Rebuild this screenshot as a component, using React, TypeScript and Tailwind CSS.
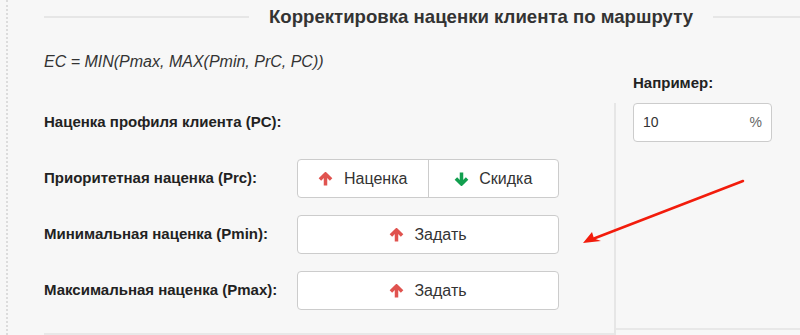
function ArrowUp() {
  return (
    <svg width="15" height="14" viewBox="0 0 15 14" className="shrink-0">
      <path d="M1.9 7.6 L7.5 2 L13.1 7.6" fill="none" stroke="#e0534f" strokeWidth="3.5" strokeLinejoin="miter" />
      <path d="M7.5 2.8 V13.5" stroke="#e0534f" strokeWidth="3.5" />
    </svg>
  )
}

function ArrowDown() {
  return (
    <svg width="15" height="14" viewBox="0 0 15 14" className="shrink-0">
      <path d="M1.9 6.4 L7.5 12 L13.1 6.4" fill="none" stroke="#129f4f" strokeWidth="3.5" strokeLinejoin="miter" />
      <path d="M7.5 0.5 V11.2" stroke="#129f4f" strokeWidth="3.5" />
    </svg>
  )
}

function Row({ label, children }: { label: string; children?: React.ReactNode }) {
  return (
    <div className="flex h-[39px] items-center">
      <div className="w-[253px] text-[15px] font-bold text-[#222]">{label}</div>
      {children}
    </div>
  )
}

function SetButton() {
  return (
    <button className="flex h-[39px] w-[262px] items-center justify-center gap-[10px] rounded-[4px] border border-[#cccccc] bg-white text-[16px] text-[#333]">
      <ArrowUp />
      <span>Задать</span>
    </button>
  )
}

export default function App() {
  return (
    <div className="relative flex h-[335px] w-[800px] overflow-hidden bg-[#f7f7f7] font-['Liberation_Sans',Arial,sans-serif] text-[#333]">
      <div className="ml-[6px] h-full border-l-2 border-dotted border-[#dcdcdc]" />

      <div className="flex flex-1 flex-col pl-[36px]">
        <div className="flex h-[34px] items-center gap-[20px]">
          <div className="h-[2px] w-[205px] bg-[#e6e6e6]" />
          <h2 className="text-[18.6px] font-bold text-[#333]">Корректировка наценки клиента по маршруту</h2>
          <div className="h-[2px] flex-1 bg-[#e6e6e6]" />
        </div>

        <div className="flex flex-1">
          <div className="flex w-[570px] flex-col border-b-2 border-[#e8e8e8] pb-[17px]">
            <p className="mt-[18px] h-[20px] text-[16px] leading-[20px] italic text-[#333]">
              EC = MIN(Pmax, MAX(Pmin, PrC, PC))
            </p>
            <div className="mt-[31px] flex flex-col gap-[17px]">
              <Row label="Наценка профиля клиента (PC):" />
              <Row label="Приоритетная наценка (Prc):">
                <div className="flex h-[39px] w-[262px] overflow-hidden rounded-[4px] border border-[#cccccc] bg-white text-[16px] text-[#333]">
                  <button className="flex flex-1 items-center justify-center gap-[11px] border-r border-[#cccccc]">
                    <ArrowUp />
                    <span>Наценка</span>
                  </button>
                  <button className="flex flex-1 items-center justify-center gap-[10px]">
                    <ArrowDown />
                    <span>Скидка</span>
                  </button>
                </div>
              </Row>
              <Row label="Минимальная наценка (Pmin):">
                <SetButton />
              </Row>
              <Row label="Максимальная наценка (Pmax):">
                <SetButton />
              </Row>
            </div>
          </div>

          <div className="flex flex-1 flex-col pt-[39px]">
            <div className="h-[20px] pl-[19px] text-[15px] leading-[20px] font-bold text-[#222]">Например:</div>
            <div className="mt-[10px] flex flex-1 flex-col border-l-2 border-[#e6e6e6]">
              <div className="ml-[17px] flex h-[39px] w-[139px] items-center justify-between rounded-[4px] border border-[#cccccc] bg-white px-[9px] text-[14px]">
                <span className="text-[#333]">10</span>
                <span className="text-[#666]">%</span>
              </div>
              <div className="mt-auto mb-[5px] h-[2px] bg-[#e8e8e8]" />
            </div>
          </div>
        </div>
      </div>

      <svg className="pointer-events-none absolute left-0 top-0" width="800" height="335">
        <line x1="743" y1="181" x2="594" y2="238.5" stroke="#f21c0c" strokeWidth="2.5" strokeLinecap="round" />
        <path d="M583 243 L592 232 L594 238.5 L601 241 Z" fill="#f21c0c" />
      </svg>
    </div>
  )
}
